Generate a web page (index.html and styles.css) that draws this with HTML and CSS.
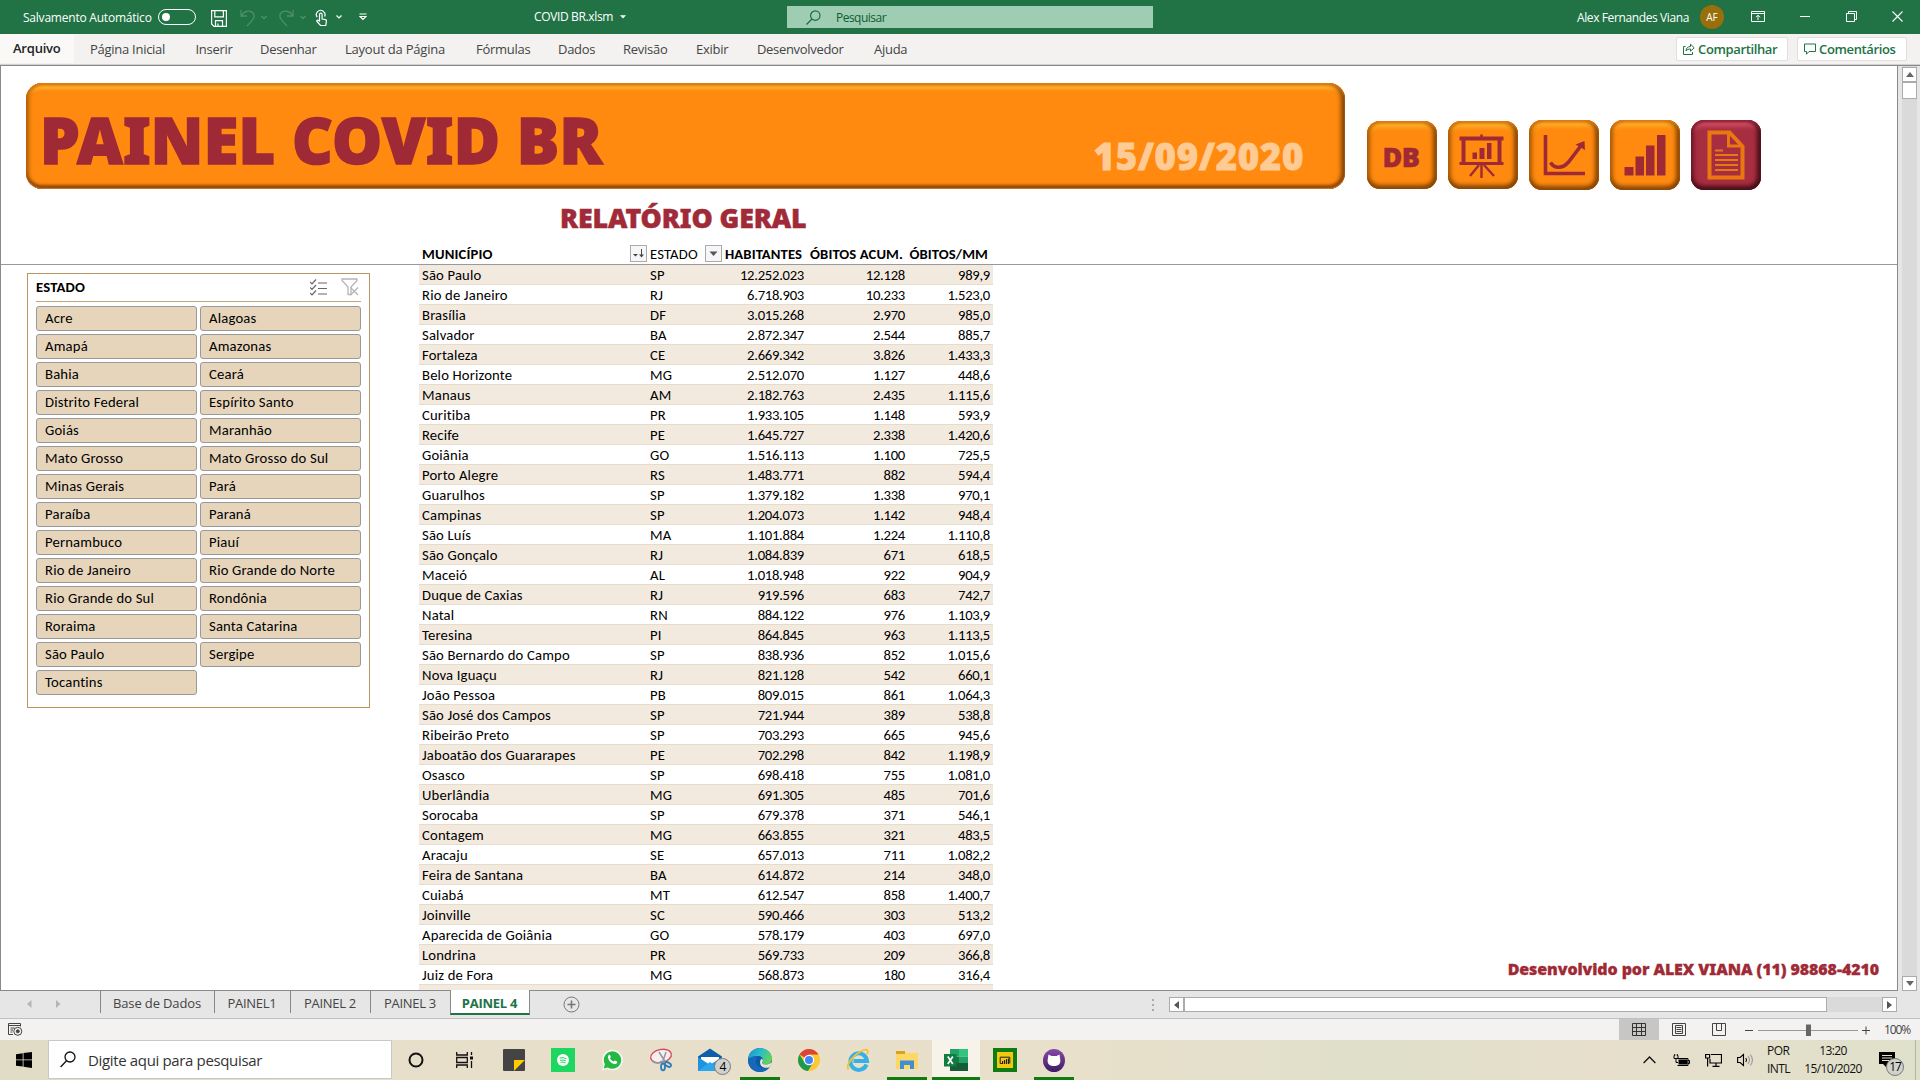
FILE: index.html
```html
<!DOCTYPE html>
<html lang="pt-BR">
<head>
<meta charset="utf-8">
<title>COVID BR.xlsm</title>
<link rel="stylesheet" href="styles.css">
</head>
<body>
<header class="titlebar">
  <span class="autosave">Salvamento Automático</span>
  <span class="toggle"></span>
  <svg class="ic-save" width="16" height="17" viewBox="0 0 16 17" fill="none" stroke="#fff" stroke-width="1.2"><path d="M.6.6h14.8v15.8H3L.6 14zM3.8.8v6h8.6v-6M4.5 16.2v-5.5h7v5.5M7 16v-2.6"/></svg>
  <svg class="ic-undo" width="28" height="18" viewBox="0 0 28 18" fill="none" stroke="#4d9069" stroke-width="1.3"><path d="M1 1v6h6M1.3 6.7C4 2 10 .8 13 4c3.500 4-1.500 8-6 13M21.500 7l2.500 2.500L26.500 7"/></svg>
  <svg class="ic-redo" width="28" height="18" viewBox="0 0 28 18" fill="none" stroke="#4d9069" stroke-width="1.300"><path d="M14 1v6H8M13.700 6.700C11 2 5 .8 2 4c-3.500 4 1.500 8 6 13M21.500 7l2.500 2.500L26.500 7"/></svg>
  <svg class="ic-hand" width="30" height="18" viewBox="0 0 30 18" fill="none" stroke="#fff" stroke-width="1.2"><path d="M4.500 12V5.500a1.300 1.300 0 0 1 2.600 0V10l3.400.7c.8.2 1 .8.900 1.500l-.6 4.300H5.500L2 12.500c-.8-1 .7-1.800 1.500-1zM2.200 8.200A4.300 4.300 0 1 1 9.600 7.500M21.500 6.500l2.500 2.500 2.500-2.500"/></svg>
  <svg class="ic-qat" width="8" height="8" viewBox="0 0 8 8" fill="none" stroke="#fff" stroke-width="1.2"><path d="M.5 1h7M1 3.500l3 3 3-3z"/></svg>
  <span class="doc">COVID BR.xlsm</span>
  <svg class="ic-caret" width="6" height="4" viewBox="0 0 6 4"><path d="M0 .3h6L3 3.500z" fill="#fff"/></svg>
  <label class="search"><svg width="15" height="15" viewBox="0 0 15 15" fill="none" stroke="#1d6a41" stroke-width="1.200"><circle cx="9.300" cy="5.600" r="4.700"/><path d="M6 9l-5.500 5.500"/></svg><span>Pesquisar</span></label>
  <span class="user">Alex Fernandes Viana</span>
  <span class="avatar">AF</span>
  <svg class="ic-ribbon" width="14" height="11" viewBox="0 0 14 11" fill="none" stroke="#fff"><path d="M.5.5h13v10H.5zM.5 2.500h13M7 9V4.500M5 6.200l2-2 2 2"/></svg>
  <svg class="ic-min" width="10" height="11" viewBox="0 0 10 11" stroke="#fff"><path d="M0 5.500h10"/></svg>
  <svg class="ic-rest" width="11" height="11" viewBox="0 0 11 11" fill="none" stroke="#fff"><path d="M.5 2.500h8v8h-8zM2.500 2.500v-2h8v8h-2"/></svg>
  <svg class="ic-close" width="11" height="11" viewBox="0 0 11 11" stroke="#fff" stroke-width="1.100"><path d="M.5.5l10 10M10.500.5l-10 10"/></svg>
</header>

<nav class="ribbon">
  <b class="tab file">Arquivo</b>
  <span class="tab t1">Página Inicial</span>
  <span class="tab t2">Inserir</span>
  <span class="tab t3">Desenhar</span>
  <span class="tab t4">Layout da Página</span>
  <span class="tab t5">Fórmulas</span>
  <span class="tab t6">Dados</span>
  <span class="tab t7">Revisão</span>
  <span class="tab t8">Exibir</span>
  <span class="tab t9">Desenvolvedor</span>
  <span class="tab t10">Ajuda</span>
  <span class="action share"><svg width="12" height="12" viewBox="0 0 12 12" fill="none" stroke="#217346"><path d="M2.500 3.500h-2v8h9V9M3 8c0-3 2-4.500 4.500-4.500V1.200l3.700 3.600-3.700 3.400V6C5.500 6 4 6.500 3 8z"/></svg>Compartilhar</span>
  <span class="action comments"><svg width="12" height="12" viewBox="0 0 12 12" fill="none" stroke="#217346"><path d="M.5 1h11v7.500H5l-2.500 2.700V8.500h-2z"/></svg>Comentários</span>
</nav>

<div class="workspace">
<main class="sheet">
  <section class="frozen">
    <div class="top">
      <div class="banner"><h1>PAINEL COVID BR</h1><span class="date">15/09/2020</span></div>
      <div class="buttons">
        <a class="btn small">DB</a>
        <a class="btn small"><svg width="46" height="46" viewBox="0 0 46 46" fill="#9f2a36"><path d="M.5 3.500h20.700V1.500h2.600v2h20.700v4H.500zM2.500 7h4v23h-4zM38.500 7h4v23h-4zM.500 29h44v3H.500zM13.500 19.500h4.500V26h-4.500zM20.500 15h5v11h-5zM28 10h4.500v16H28z"/><path d="M22.500 31v14M20 32L11 43M25 32l10 11" stroke="#9f2a36" stroke-width="2.400"/></svg></a>
        <a class="btn"><svg width="46" height="46" viewBox="0 0 46 46" fill="none" stroke="#9f2a36"><path d="M4.500 3v38.500H44" stroke-width="3.600"/><path d="M9.500 30.500c4 6.500 12 6.500 18-.5L40.500 13" stroke-width="3.600"/><path d="M34.500 12.500l9-3.500.5 9z" fill="#9f2a36" stroke="none"/></svg></a>
        <a class="btn"><svg width="46" height="46" viewBox="0 0 46 46" fill="#9f2a36"><path d="M2.500 35h9v8.500h-9zM13.500 24.500h8.500v19h-8.500zM24 13.500h8.500v30H24zM35 3h8.500v40.500H35z"/></svg></a>
        <a class="btn active"><svg width="46" height="54" viewBox="0 0 46 54" fill="none" stroke="#e8780f"><path d="M6.500 4.500h20l13 14v31h-33z" stroke-width="4"/><path d="M25.500 4v14h14" stroke-width="3"/><path d="M12 22.500h8M12 27h23M12 32h23M12 37h23M12 42h23" stroke-width="2"/></svg></a>
      </div>
    </div>
    <h2>RELATÓRIO GERAL</h2>
    <div class="row head">
      <b>MUNICÍPIO<i class="fb"><svg width="11" height="11" viewBox="0 0 11 11"><path d="M0 6h5L2.500 8.500zM6 6.500h5L8.500 9.500z" fill="#444"/><path d="M8.500 1v6" stroke="#444"/></svg></i></b>
      <span>ESTADO<i class="fb"><svg width="9" height="6" viewBox="0 0 9 6"><path d="M.5.5h8l-4 4.500z" fill="#555"/></svg></i></span>
      <b>HABITANTES</b><b>ÓBITOS ACUM.</b><b>ÓBITOS/MM</b>
    </div>
  </section>

  <section class="scrolling">
    <aside class="slicer">
      <div class="slicer-head"><b>ESTADO</b>
        <svg width="17" height="17" viewBox="0 0 17 17" fill="none" stroke="#666"><path d="M0 3l2 2 4-4.500M0 8.500l2 2L6 6M0 14l2 2 4-4.500M8 4h9M8 9.500h9M8 15h9" stroke-width="1.200"/></svg>
        <svg width="18" height="18" viewBox="0 0 18 18" fill="none" stroke="#b5b5b5"><path d="M1 1h15v1.500L10 9v7.500H7V9L1 2.500z" stroke-width="1.300"/><path d="M9.500 9.500l7.500 7.500M17 9.500L9.500 17" stroke-width="1.300"/></svg>
      </div>
      <div class="items">
        <span>Acre</span><span>Alagoas</span>
        <span>Amapá</span><span>Amazonas</span>
        <span>Bahia</span><span>Ceará</span>
        <span>Distrito Federal</span><span>Espírito Santo</span>
        <span>Goiás</span><span>Maranhão</span>
        <span>Mato Grosso</span><span>Mato Grosso do Sul</span>
        <span>Minas Gerais</span><span>Pará</span>
        <span>Paraíba</span><span>Paraná</span>
        <span>Pernambuco</span><span>Piauí</span>
        <span>Rio de Janeiro</span><span>Rio Grande do Norte</span>
        <span>Rio Grande do Sul</span><span>Rondônia</span>
        <span>Roraima</span><span>Santa Catarina</span>
        <span>São Paulo</span><span>Sergipe</span>
        <span>Tocantins</span>
      </div>
    </aside>
    <div class="data">
      <div class="row"><span>São Paulo</span><span>SP</span><span>12.252.023</span><span>12.128</span><span>989,9</span></div>
      <div class="row"><span>Rio de Janeiro</span><span>RJ</span><span>6.718.903</span><span>10.233</span><span>1.523,0</span></div>
      <div class="row"><span>Brasília</span><span>DF</span><span>3.015.268</span><span>2.970</span><span>985,0</span></div>
      <div class="row"><span>Salvador</span><span>BA</span><span>2.872.347</span><span>2.544</span><span>885,7</span></div>
      <div class="row"><span>Fortaleza</span><span>CE</span><span>2.669.342</span><span>3.826</span><span>1.433,3</span></div>
      <div class="row"><span>Belo Horizonte</span><span>MG</span><span>2.512.070</span><span>1.127</span><span>448,6</span></div>
      <div class="row"><span>Manaus</span><span>AM</span><span>2.182.763</span><span>2.435</span><span>1.115,6</span></div>
      <div class="row"><span>Curitiba</span><span>PR</span><span>1.933.105</span><span>1.148</span><span>593,9</span></div>
      <div class="row"><span>Recife</span><span>PE</span><span>1.645.727</span><span>2.338</span><span>1.420,6</span></div>
      <div class="row"><span>Goiânia</span><span>GO</span><span>1.516.113</span><span>1.100</span><span>725,5</span></div>
      <div class="row"><span>Porto Alegre</span><span>RS</span><span>1.483.771</span><span>882</span><span>594,4</span></div>
      <div class="row"><span>Guarulhos</span><span>SP</span><span>1.379.182</span><span>1.338</span><span>970,1</span></div>
      <div class="row"><span>Campinas</span><span>SP</span><span>1.204.073</span><span>1.142</span><span>948,4</span></div>
      <div class="row"><span>São Luís</span><span>MA</span><span>1.101.884</span><span>1.224</span><span>1.110,8</span></div>
      <div class="row"><span>São Gonçalo</span><span>RJ</span><span>1.084.839</span><span>671</span><span>618,5</span></div>
      <div class="row"><span>Maceió</span><span>AL</span><span>1.018.948</span><span>922</span><span>904,9</span></div>
      <div class="row"><span>Duque de Caxias</span><span>RJ</span><span>919.596</span><span>683</span><span>742,7</span></div>
      <div class="row"><span>Natal</span><span>RN</span><span>884.122</span><span>976</span><span>1.103,9</span></div>
      <div class="row"><span>Teresina</span><span>PI</span><span>864.845</span><span>963</span><span>1.113,5</span></div>
      <div class="row"><span>São Bernardo do Campo</span><span>SP</span><span>838.936</span><span>852</span><span>1.015,6</span></div>
      <div class="row"><span>Nova Iguaçu</span><span>RJ</span><span>821.128</span><span>542</span><span>660,1</span></div>
      <div class="row"><span>João Pessoa</span><span>PB</span><span>809.015</span><span>861</span><span>1.064,3</span></div>
      <div class="row"><span>São José dos Campos</span><span>SP</span><span>721.944</span><span>389</span><span>538,8</span></div>
      <div class="row"><span>Ribeirão Preto</span><span>SP</span><span>703.293</span><span>665</span><span>945,6</span></div>
      <div class="row"><span>Jaboatão dos Guararapes</span><span>PE</span><span>702.298</span><span>842</span><span>1.198,9</span></div>
      <div class="row"><span>Osasco</span><span>SP</span><span>698.418</span><span>755</span><span>1.081,0</span></div>
      <div class="row"><span>Uberlândia</span><span>MG</span><span>691.305</span><span>485</span><span>701,6</span></div>
      <div class="row"><span>Sorocaba</span><span>SP</span><span>679.378</span><span>371</span><span>546,1</span></div>
      <div class="row"><span>Contagem</span><span>MG</span><span>663.855</span><span>321</span><span>483,5</span></div>
      <div class="row"><span>Aracaju</span><span>SE</span><span>657.013</span><span>711</span><span>1.082,2</span></div>
      <div class="row"><span>Feira de Santana</span><span>BA</span><span>614.872</span><span>214</span><span>348,0</span></div>
      <div class="row"><span>Cuiabá</span><span>MT</span><span>612.547</span><span>858</span><span>1.400,7</span></div>
      <div class="row"><span>Joinville</span><span>SC</span><span>590.466</span><span>303</span><span>513,2</span></div>
      <div class="row"><span>Aparecida de Goiânia</span><span>GO</span><span>578.179</span><span>403</span><span>697,0</span></div>
      <div class="row"><span>Londrina</span><span>PR</span><span>569.733</span><span>209</span><span>366,8</span></div>
      <div class="row"><span>Juiz de Fora</span><span>MG</span><span>568.873</span><span>180</span><span>316,4</span></div>
      <div class="row"></div>
    </div>
    <p class="credit">Desenvolvido por ALEX VIANA (11) 98868-4210</p>
  </section>
</main>
<div class="vscroll">
  <span class="sb"><svg width="8" height="5" viewBox="0 0 8 5"><path d="M0 5h8L4 0z" fill="#666"/></svg></span>
  <span class="vthumb"></span>
  <span class="sb bottom"><svg width="8" height="5" viewBox="0 0 8 5"><path d="M0 0h8L4 5z" fill="#666"/></svg></span>
</div>
</div>

<div class="sheettabs">
  <svg class="arrows" width="34" height="8" viewBox="0 0 34 8" fill="#b5b5b5"><path d="M4.500 0v8L0 4zM29 0v8l4.500-4z"/></svg>
  <span class="st s1">Base de Dados</span><span class="st s2">PAINEL1</span><span class="st s3">PAINEL 2</span><span class="st s4">PAINEL 3</span><b class="st s5">PAINEL 4</b>
  <svg class="plus" width="17" height="17" viewBox="0 0 17 17" fill="none" stroke="#777"><circle cx="8.500" cy="8.500" r="7.500"/><path d="M8.500 4.500v8M4.500 8.500h8" stroke-width="1.600"/></svg>
  <svg class="dots" width="2" height="12" viewBox="0 0 2 12" fill="#aaa"><path d="M0 0h2v2H0zM0 5h2v2H0zM0 10h2v2H0z"/></svg>
  <div class="hscroll"><span class="sb"><svg width="5" height="8" viewBox="0 0 5 8"><path d="M5 0v8L0 4z" fill="#555"/></svg></span><span class="hthumb"></span><span class="sb right"><svg width="5" height="8" viewBox="0 0 5 8"><path d="M0 0v8l5-4z" fill="#555"/></svg></span></div>
</div>

<div class="statusbar">
  <svg class="macro" width="15" height="13" viewBox="0 0 15 13" fill="none" stroke="#444"><path d="M5 11.500H.5V.5h12v3M.5 2.500h12M2.500 5h4M2.500 7h2.500M2.500 9h2"/><circle cx="9.800" cy="8.300" r="4"/><circle cx="9.800" cy="8.300" r="1.500" fill="#444"/></svg>
  <span class="view on"><svg width="14" height="13" viewBox="0 0 14 13" fill="none" stroke="#333"><path d="M.5.5h13v12H.5zM.5 4.500h13M.5 8.500h13M4.500.5v12M9.500.5v12"/></svg></span>
  <span class="view"><svg width="14" height="13" viewBox="0 0 14 13" fill="none" stroke="#444"><path d="M.5.5h13v12H.5zM3.500 2.500h7v8h-7zM4.500 4.500h5M4.500 6.500h5M4.500 8.500h5"/></svg></span>
  <span class="view"><svg width="14" height="13" viewBox="0 0 14 13" fill="none" stroke="#444"><path d="M.5.5h13v12H.5zM4.500.5v7M9.500.5v7M4.500 7.500h5"/></svg></span>
  <svg class="zoom" width="128" height="14" viewBox="0 0 128 14"><path d="M1 7.500h8M118 7.500h8M122 3.500v8" stroke="#444"/><path d="M14 7.500h100" stroke="#999"/><path d="M62 1.500h5v11.500h-5z" fill="#666"/></svg>
  <span class="pct">100%</span>
</div>

<footer class="taskbar">
  <span class="start"><svg width="16" height="16" viewBox="0 0 16 16"><path d="M0 2.200l6.700-.9v6.200H0zM7.500 1.100L16 0v7.500H7.500zM0 8.300h6.700v6.300L0 13.700zM7.500 8.300H16V16l-8.500-1.200z"/></svg></span>
  <label class="tsearch"><svg width="16" height="17" viewBox="0 0 16 17" fill="none" stroke="#111" stroke-width="1.300"><circle cx="10" cy="6" r="5"/><path d="M6.500 9.700L.6 16"/></svg><span>Digite aqui para pesquisar</span></label>
  <span class="app"><svg width="16" height="16" viewBox="0 0 16 16"><circle cx="8" cy="8" r="6.500" fill="none" stroke="#111" stroke-width="2"/></svg></span>
  <span class="app"><svg width="18" height="16" viewBox="0 0 18 16" fill="none" stroke="#111" stroke-width="1.300"><path d="M.7 0v3h10.600V0M.7 16v-3h10.600v3M.7 5.500h10.600v5H.7zM15.500 0v3M15.500 9v7"/><path d="M14 4.500h3v3h-3z" fill="#111" stroke="none"/></svg></span>
  <span class="app"><svg width="22" height="22" viewBox="0 0 22 22"><path d="M0 1q0-1 1-1h20q1 0 1 1v10L11 22H1q-1 0-1-1z" fill="#444"/><path d="M11 11h11L11 22z" fill="#fc0"/><path d="M22 11v10q0 1-1 1H11z" fill="#444"/></svg></span>
  <span class="app"><svg width="24" height="24" viewBox="0 0 24 24"><path d="M0 0h24v24H0z" fill="#1ed760"/><circle cx="12" cy="12" r="6" fill="#fff"/><path d="M8.500 10q3.500-1 7 .7M9 12.300q3-.8 6 .6M9.500 14.300q2.500-.6 5 .5" fill="none" stroke="#1ed760"/></svg></span>
  <span class="app"><svg width="22" height="22" viewBox="0 0 22 22"><path d="M1 21.500l1.500-5.500A10.300 10.300 0 1 1 6.500 20z" fill="#f7faf5"/><path d="M2.700 19.500l1.200-4.200a8.700 8.700 0 1 1 3 3.100z" fill="#25b944"/><path d="M7.500 6.200c.8-.8 1.500-.5 1.800.4l.5 1.400-.9 1.300c1 1.800 2.200 2.700 3.800 3.300l1.100-1.200 2.200 1c.5.4.2 1.500-.4 2-3 2.300-10.500-3.300-8.100-8.200z" fill="#fff"/></svg></span>
  <span class="app"><svg width="24" height="24" viewBox="0 0 24 24" fill="none"><ellipse cx="12" cy="8" rx="10.500" ry="6.500" transform="rotate(-12 12 8)" fill="#f6efec" stroke="#d9485c" stroke-width="1.300"/><path d="M10 4l7 11M17 4l-4 12M3 13q5 4 10 0" stroke="#8a9aa8" stroke-width="1.500"/><ellipse cx="14" cy="19" rx="2" ry="3.300" stroke="#2b7fb8" stroke-width="1.800"/><ellipse cx="19" cy="16.500" rx="3.300" ry="1.900" transform="rotate(30 19 16.500)" stroke="#2b7fb8" stroke-width="1.800"/></svg></span>
  <span class="app"><svg width="24" height="24" viewBox="0 0 24 24"><path d="M0 8.500L12 .5l12 8V23H0z" fill="#0f5fa8"/><path d="M3 9h18v7H3z" fill="#fff"/><path d="M0 9l12 8L24 9v14H0z" fill="#1f93e0"/><path d="M0 23l12-9 12 9z" fill="#2aa7ee"/></svg><i class="badge b4">4</i></span>
  <span class="app run"><svg width="24" height="24" viewBox="0 0 24 24"><defs><linearGradient id="eg" x1="0" y1="0" x2="1" y2=".4"><stop offset="0" stop-color="#1a8fd8"/><stop offset=".6" stop-color="#2fc0c4"/><stop offset="1" stop-color="#5fd35a"/></linearGradient></defs><circle cx="12" cy="12" r="12" fill="#0c59a4"/><path d="M0 11C1 4 6 0 12 0c7 0 12 5 12 10.500 0 4-3 6-6.500 6-3 0-4-1.200-3-2.700 1.500-2.300-.5-5.800-4-5.800C6 8 2 9.500 0 11z" fill="url(#eg)"/><path d="M8 12c-1 6 5 9.500 13 7.500-2 3-5 4.500-9 4.500C5 24 0 19 0 12c2-3 6-4.500 10-4-1.200 1-1.800 2.500-2 4z" fill="#1668b8"/><path d="M14.500 13.800c-1 1.500 0 2.700 3 2.700 2 0 4.500-.7 6-2.300 1 1.500-.5 4-2.500 5.300-5 1.200-9-1-9-5 0-1.500.5-3 1.500-3.800 1.500.6 1.700 2 1 3.100z" fill="#e9e2cf"/></svg></span>
  <span class="app"><svg width="22" height="22" viewBox="0 0 22 22"><circle cx="11" cy="11" r="11" fill="#fcc934"/><path d="M11 11L1.500 5.500A11 11 0 0 1 20.500 5.500H11z" fill="#dc4437"/><path d="M1.500 5.500A11 11 0 0 0 10 22l5.500-9L11 11 6.500 13.500z" fill="#1e9a50"/><circle cx="11" cy="11" r="5.200" fill="#fff"/><circle cx="11" cy="11" r="4" fill="#4285f4"/></svg></span>
  <span class="app"><svg width="24" height="24" viewBox="0 0 24 24" fill="none"><path d="M20.500 16.500A8.300 8.300 0 1 1 21 13H7.500" stroke="#38b0e6" stroke-width="4"/><path d="M2.500 21.500C-1 17 9 5 18 2c4-1.200 4.500 1.500 3 4" stroke="#f3c32e" stroke-width="1.800"/></svg></span>
  <span class="app run"><svg width="22" height="20" viewBox="0 0 22 20"><path d="M0 1h8.500l1.500 2H22v16H0z" fill="#ffd766"/><path d="M0 1h9v3H0z" fill="#d9a11c"/><path d="M4 10.500h14V19h-4v-4H8v4H4z" fill="#3f8fd2"/></svg></span>
  <span class="app run front"><svg width="24" height="22" viewBox="0 0 24 22"><path d="M6 0h9v7.500H6z" fill="#21a366"/><path d="M15 0h9v7.500h-9z" fill="#33c481"/><path d="M6 7.500h9V14H6z" fill="#107c41"/><path d="M15 7.500h9V14h-9z" fill="#21a366"/><path d="M6 14h18v8H6z" fill="#185c37"/><path d="M0 5h12.500v12.500H0z" fill="#107c41"/><path d="M3.800 7.500l5 7.500M8.800 7.500l-5 7.500" stroke="#fff" stroke-width="1.700"/></svg></span>
  <span class="app"><svg width="24" height="24" viewBox="0 0 24 24"><path d="M0 0h24v24H0z" fill="#107c10"/><path d="M4 4h16v16H4z" fill="#f2c811"/><path d="M9 15.500H7.200v-6.300h9.600v6.300" fill="none" stroke="#222"/><path d="M9 13h1.200v3H9zM11 12h1.200v4H11zM13 11h1.200v5H13zM15 10.500h1v5.500h-1z" fill="#222"/></svg></span>
  <span class="app run"><svg width="22" height="23" viewBox="0 0 22 23"><defs><linearGradient id="gh" x2="0" y2="1"><stop offset="0" stop-color="#8a48a8"/><stop offset="1" stop-color="#3b1c66"/></linearGradient></defs><ellipse cx="11" cy="11.500" rx="11" ry="11.500" fill="url(#gh)"/><path d="M5.500 5.500l3 1.500h5l3-1.500.6 4c1.300 5-1.400 7.500-6.100 7.500s-7.400-2.500-6.100-7.500z" fill="#fff"/></svg></span>
  <div class="tray">
    <svg width="13" height="8" viewBox="0 0 13 8" fill="none" stroke="#111" stroke-width="1.300"><path d="M.6 7L6.500 1l5.900 6"/></svg>
    <svg class="bat" width="17" height="13" viewBox="0 0 17 13"><path d="M4.500 4.500H15v7H4.500M15 6.500h1.500v3H15M1 1.500v3h4v-3M3 5v3.500h2M1.700 0v2M4.300 0v2" fill="none" stroke="#000"/><path d="M5.500 5.500h9v5h-9z"/></svg>
    <svg class="net" width="17" height="14" viewBox="0 0 17 14" fill="none" stroke="#000" stroke-width="1.200"><path d="M6 1.500h10.500v8.500H5V6M11 10v3M7.500 13.300h7M.6 1.500h4v3.500h-4zM2.600 5v8.500"/></svg>
    <svg class="vol" width="17" height="14" viewBox="0 0 17 14" fill="none" stroke="#000" stroke-width="1.100"><path d="M.6 4.500h2.500L6.500 1.500v11L3.100 9.500H.6zM8.800 5q1.500 2 0 4"/><path d="M11 3q3 4 0 8M13.300 1.500q4.300 5.500 0 11" stroke="#999"/></svg>
    <span class="lang">POR<br>INTL</span>
    <span class="clock">13:20<br>15/10/2020</span>
    <span class="notif"><svg width="16" height="16" viewBox="0 0 16 16"><path d="M0 0h16v12H8v4l-4-4H0z"/><path d="M3 3.500h10M3 6h10M3 8.500h10" stroke="#e4e0c8" stroke-width="1.200"/></svg><i class="badge b17">17</i></span>
    <span class="peek"></span>
  </div>
</footer>
</body>
</html>
```
FILE: styles.css
```css
* { box-sizing: border-box; }
body {
  margin: 0; width: 1920px; height: 1080px; overflow: hidden;
  display: flex; flex-direction: column; background: #e6e6e6;
  font-family: "Open Sans", "Noto Sans", sans-serif; font-size: 13px; color: #333;
}
svg { display: block; flex: none; }
h1, h2, p { margin: 0; }
i { font-style: normal; }
span, b, label { white-space: nowrap; }

/* title bar */
.titlebar { height: 34px; flex: none; background: #217346; color: #fff; font-size: 12px; display: flex; align-items: center; }
.titlebar > * { flex: none; }
.autosave { width: 135px; margin-left: 23px; letter-spacing: -.22px; }
.toggle { width: 38px; height: 16px; border: 1px solid #fff; border-radius: 8px; display: flex; align-items: center; padding-left: 3px; }
.toggle::before { content: ""; width: 8px; height: 8px; border-radius: 50%; background: #fff; }
.ic-save { margin: 2px 0 0 15px; }
.ic-undo { margin: 1px 0 0 13px; }
.ic-redo { margin: 1px 0 0 11px; }
.ic-hand { margin: 2px 0 0 8px; }
.ic-qat { margin-left: 14px; }
.doc { margin: -2px 0 0 167px; width: 86px; letter-spacing: -.36px; }
.ic-caret { margin-top: -1px; }
.search { margin-left: 161px; width: 366px; height: 22px; background: #9fcdb3; color: #0e5c2f; display: flex; align-items: center; padding-left: 19px; gap: 15px; letter-spacing: -.52px; }
.user { margin-left: 424px; width: 123px; letter-spacing: -.39px; }
.avatar { width: 24px; height: 24px; border-radius: 50%; background: #986f0b; font-size: 10px; display: flex; align-items: center; justify-content: center; }
.ic-ribbon { margin: -2px 0 0 27px; }
.ic-min { margin: -2px 0 0 35px; }
.ic-rest { margin: -2px 0 0 36px; }
.ic-close { margin: -2px 0 0 35px; }

/* ribbon tabs */
.ribbon { height: 32px; flex: none; background: #f3f2f1; border-bottom: 1px solid #8a8a8a; display: flex; align-items: center; padding-bottom: 2px; color: #444; letter-spacing: -.27px; box-shadow: inset 0 -1px #d0d0d0; }
.tab { flex: none; }
.file { width: 74px; height: 29px; line-height: 29px; padding-left: 13px; background: #faf9f8; font-weight: 600; color: #222; letter-spacing: -.22px; }
.t1 { margin-left: 16px; width: 105.500px; }
.t2 { width: 64.500px; }
.t3 { width: 85px; }
.t4 { width: 131px; letter-spacing: -.216px; }
.t5 { width: 82px; }
.t6 { width: 65px; }
.t7 { width: 73px; }
.t8 { width: 61px; }
.t9 { width: 117px; letter-spacing: -.32px; }
.action { height: 24px; border: 1px solid #e1dfdd; border-radius: 2px; background: #fff; color: #217346; font-weight: 600; display: flex; align-items: center; gap: 3px; padding-left: 6px; letter-spacing: -.36px; }
.share { margin-left: auto; width: 112px; }
.comments { margin: 0 13px 0 9px; width: 110px; }

/* worksheet */
.workspace { height: 925px; flex: none; display: flex; }
.sheet { width: 1898px; background: #fff; border: solid #8a8a8a; border-width: 0 1px 1px; font-family: Carlito, Calibri, Lato, sans-serif; font-size: 14.670px; color: #000; display: flex; flex-direction: column; }
.frozen { height: 199px; flex: none; border-bottom: 1px solid #999; display: flex; flex-direction: column; }
.top { display: flex; padding: 17px 0 0 25px; height: 125px; flex: none; }
.banner {
  width: 1319px; height: 106px; border-radius: 16px; background: #ff8a0f; display: flex; justify-content: space-between; padding: 0 41px 0 14px;
  font-family: "Noto Sans", sans-serif; font-weight: 900;
  box-shadow: inset 0 -1px 1px #c97a30, inset 0 -4px 3px #94480a, inset 0 2px 2px #e67a12, inset -4px 0 4px #7e4308, inset 3px 0 4px #b86408, inset 0 7px 3px -1px #ffb42c;
}
h1 { font-size: 63px; line-height: 105px; font-weight: 900; color: #9f2a36; padding-top: 4px; letter-spacing: .25px; -webkit-text-stroke: 1.600px #9f2a36; }
.date { font-size: 36.500px; line-height: 60px; letter-spacing: .7px; color: #ffcb95; margin-top: 43px; -webkit-text-stroke: .8px #ffcb95; }
.buttons { display: flex; gap: 11px; margin: 37px 0 0 22px; align-items: flex-start; }
.btn {
  width: 70px; height: 70px; border-radius: 13px; background: #ff8a0f; color: #9f2a36; display: flex; align-items: center; justify-content: center; font: 900 27px "Noto Sans", sans-serif; letter-spacing: -.5px;
  box-shadow: inset 0 -4px 4px #8a4808, inset 0 2px 2px #e67a12, inset -4px 0 4px #8a4808, inset 3px 0 4px #b86408, inset 0 7px 4px -1px #ffb42c;
}
.small { height: 68px; margin-top: 1px; padding: 2px 2px 0 0; -webkit-text-stroke: .5px #9f2a36; }
.active { background: #a72e40; box-shadow: inset 0 -4px 4px #4a1018, inset 0 2px 2px #96263a, inset -4px 0 4px #4a1018, inset 3px 0 4px #7c1c2c, inset 0 7px 4px -1px #d8506a; }
h2 { font: 900 26.700px/30px "Noto Sans", sans-serif; color: #a02a38; letter-spacing: -.08px; margin: 12px 0 0 559px; height: 42px; -webkit-text-stroke: .5px #a02a38; }

.row { display: grid; grid-template-columns: 228px 76px 84px 101px 85px; height: 20px; line-height: 20px; }
.row > :nth-child(n+3) { text-align: right; padding-right: 3px; letter-spacing: -.28px; }
.row > * { padding-left: 3px; letter-spacing: .17px; }
.head { margin-left: 418px; width: 574px; line-height: 21px; }
.head > :nth-child(n+3) { letter-spacing: .09px; padding-right: 5px; padding-left: 0; }
.head > :nth-child(-n+2) { display: flex; justify-content: space-between; letter-spacing: .15px; }
.fb { width: 17px; height: 17px; margin-top: 1px; border: 1px solid #ababab; background: #f6f6f8; display: flex; align-items: center; justify-content: center; }
.head > :nth-child(2) .fb { margin-right: 1px; }

.scrolling { display: flex; flex: none; height: 725px; overflow: hidden; }
.slicer { margin: 8px 0 0 26px; width: 343px; height: 435px; border: 1px solid #b8955c; padding: 0 8px; letter-spacing: .18px; flex: none; }
.slicer-head { height: 28px; display: flex; align-items: center; border-bottom: 1px solid #c2a675; gap: 14px; padding: 0 2px 1px 0; }
.slicer-head b { margin-right: auto; }
.items { display: grid; grid-template-columns: 161px 161px; gap: 3px; padding-top: 4px; }
.items span { height: 25px; line-height: 23px; border: 1px solid #999; border-radius: 3px; background: #e6d5bb; padding-left: 8px; }
.data { margin-left: 49px; width: 574px; flex: none; }
.data .row { border-bottom: 1px solid #e8dcc8; }
.data .row:nth-child(odd) { background: #f3eadf; }
.credit { margin: 692px 18px 0 auto; font: 900 16px/24px "Noto Sans", sans-serif; color: #9f2a36; letter-spacing: -.1px; -webkit-text-stroke: .3px #9f2a36; }

.vscroll { width: 22px; padding: 1px 3px 0 4px; display: flex; flex-direction: column; background: linear-gradient(#dadada, #dadada) 4px 0 / 15px 100% no-repeat; }
.sb { width: 15px; height: 15px; flex: none; border: 1px solid #ababab; background: #fff; display: flex; align-items: center; justify-content: center; }
.vthumb { height: 17px; border: 1px solid #ababab; background: #fff; }
.bottom { margin-top: auto; }

/* sheet tabs */
.sheettabs { height: 28px; flex: none; display: flex; border-bottom: 1px solid #c0c0c0; color: #444; }
.arrows { margin: 9px 40px 0 27px; }
.st { height: 22px; line-height: 25px; border-left: 1px solid #888; flex: none; text-align: center; letter-spacing: -.3px; padding-right: 1px; }
.s1 { margin-left: -1px; width: 114px; letter-spacing: -.13px; }
.s2 { width: 76px; }
.s3, .s4 { width: 80px; }
.s5 { width: 80px; height: 25px; margin-top: -1px; line-height: 27px; border-right: 1px solid #888; border-bottom: 2px solid #217346; background: #fff; color: #217346; letter-spacing: -.24px; }
.plus { margin: 5px 0 0 33px; }
.dots { margin: 8px 0 0 572px; }
.hscroll { margin: 6px 23px 0 auto; width: 728px; height: 15px; display: flex; background: #dadada; }
.hthumb { width: 643px; border: 1px solid #ababab; background: #fff; }
.right { margin-left: auto; }

/* status bar */
.statusbar { height: 21px; flex: none; background: #f3f2f1; display: flex; align-items: center; }
.macro { margin: 0 auto 0 8px; }
.view { width: 40px; height: 21px; display: flex; align-items: center; justify-content: center; }
.on { background: #c8c6c4; }
.zoom { margin-left: 5px; }
.pct { font-size: 12px; width: 48px; padding-left: 12px; letter-spacing: -1.100px; color: #444; }

/* taskbar */
.taskbar { height: 40px; flex: none; display: flex; background: linear-gradient(90deg, #e0dcc6, #e8dfca 25%, #e9e0cb 55%, #dfdfca 72%, #e7dfcb 83%, #dfe0cb); color: #111; }
.start { width: 48px; display: flex; align-items: center; justify-content: center; }
.tsearch { width: 344px; height: 39px; background: #fff; border: 1px solid #c8c8c8; display: flex; align-items: center; padding-left: 11px; gap: 12px; font-size: 15px; color: #333; letter-spacing: -.35px; }
.app { width: 48px; margin-right: 1.080px; display: flex; align-items: center; justify-content: center; position: relative; background: linear-gradient(#107c10, #107c10) center bottom / 0 3px no-repeat; }
.run { background-size: 40px 3px; }
.front { background-color: #f7f3ea; background-size: 48px 3px; }
.badge { position: absolute; border-radius: 50%; border: 1px solid #777; background: #d2d2cd; display: flex; align-items: center; justify-content: center; font-size: 12px; color: #000; }
.b4 { width: 17px; height: 17px; left: 28px; top: 18px; }
.tray { margin-left: auto; display: flex; align-items: center; font-size: 12px; line-height: 18px; }
.bat { margin-left: 17px; }
.net { margin-left: 15px; }
.vol { margin-left: 15px; }
.lang { margin-left: 13px; width: 36px; letter-spacing: -.56px; }
.clock { width: 60px; text-align: center; letter-spacing: -.62px; }
.notif { position: relative; margin-left: 16px; width: 36px; }
.b17 { width: 18px; height: 18px; left: 7px; top: 6px; letter-spacing: -1px; }
.peek { width: 5px; height: 40px; border-left: 1px solid #b5b5a5; }
```
